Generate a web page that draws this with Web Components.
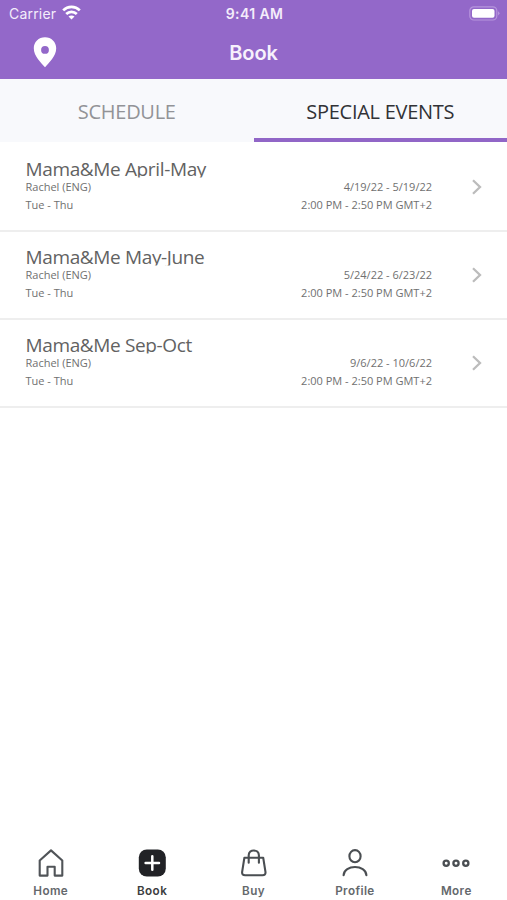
<!DOCTYPE html>
<html lang="en">
<head>
<meta charset="utf-8">
<title>Book</title>
<style>
html,body{margin:0;height:100%;background:#fff;overflow:hidden}
</style>
</head>
<body>
<booking-app></booking-app>
<script>
const define = (name, html) => {
  const t = document.createElement('template');
  t.innerHTML = html;
  customElements.define(name, class extends HTMLElement {
    constructor() {
      super();
      this.attachShadow({ mode: 'open' }).appendChild(t.content.cloneNode(true));
    }
  });
};

define('status-bar', `
<style>
:host{display:grid;grid-template-columns:1fr auto 1fr;align-items:center;height:27px;padding:0 7px 0 9px;font:400 14px/27px Inter,"Liberation Sans",sans-serif;color:#f4edfb}
.left{display:flex;align-items:center;gap:6px;letter-spacing:.2px}
.time{font-weight:600;font-size:14px;letter-spacing:.4px}
svg{display:block}
.left svg{margin-top:-2px}
.battery{justify-self:end;margin-top:-1px}
</style>
<div class="left"><span>Carrier</span>
<svg width="19" height="15" viewBox="0 0 19 15" fill="none" stroke="#fff" stroke-width="2.700"><path d="M1.200 5.400C5.800.8 13.200.8 17.800 5.400"/><path d="M4.200 9c3-2.900 7.600-2.900 10.600 0"/><path d="M9.500 14.600 6.500 11.600c1.700-1.600 4.300-1.600 6 0z" fill="#fff" stroke="none"/></svg></div>
<span class="time">9:41 AM</span>
<svg class="battery" width="31" height="15" viewBox="0 0 31 15"><rect x=".8" y=".8" width="27" height="13.200" rx="4" fill="none" stroke="#b795dd" stroke-width="1.200"/><rect x="3" y="3" width="22.500" height="8.800" rx="2" fill="#fff"/><path d="M29 5.200q3 2.100 0 4.200z" fill="#b795dd"/></svg>`);

define('nav-header', `
<style>
:host{display:grid;grid-template-columns:1fr auto 1fr;align-items:center;height:52px;padding:0 33px;box-sizing:border-box;font:600 20px/52px Inter,"Liberation Sans",sans-serif;color:#f7f1fc}
svg{display:block;margin-top:-1px}
.title{letter-spacing:-.15px}
</style>
<svg width="24" height="31" viewBox="0 0 24 31"><path fill="#fff" fill-rule="evenodd" d="M12 .3C5.600.3.8 5.100.8 11.300.8 19.300 8 25.800 12 30.300c4-4.500 11.200-11 11.200-19C23.200 5.100 18.400.3 12 .3zm0 8.700a3.900 3.900 0 1 1 0 7.800A3.900 3.900 0 0 1 12 9z"/></svg>
<span class="title"><slot></slot></span>`);

define('tab-item', `
<style>
:host{display:flex;flex:1;box-sizing:border-box;height:63px;justify-content:center;color:#929397;border-bottom:4px solid transparent;font:400 20px/65px "Open Sans","Noto Sans",sans-serif}
:host([selected]){color:#313236;border-bottom-color:#9166c7}
span{letter-spacing:-.28px;white-space:nowrap}
</style><span><slot></slot></span>`);

define('tab-strip', `
<style>:host{display:flex;background:#f8f9fc;height:63px}</style><slot></slot>`);

define('event-row', `
<style>
:host{display:flex;box-sizing:border-box;height:88px;padding:16px 25px 0 25.500px;border-bottom:2px solid #eee;color:#707070;font:400 11px/18px "Open Sans","Noto Sans",sans-serif}
.info{flex:1}
.title{height:18px;line-height:18px;overflow:hidden;clip-path:inset(0 0 .5px 0);font-size:19px;color:#626262;white-space:nowrap;letter-spacing:-.36px}
.meta{display:flex;justify-content:space-between}
.arrow{width:50px;display:flex;justify-content:flex-end;padding-top:19px}
svg{display:block}
</style>
<div class="info">
<div class="title"><slot name="title"></slot></div>
<div class="meta"><slot name="host"></slot><slot name="dates"></slot></div>
<div class="meta"><slot name="days"></slot><slot name="time"></slot></div>
</div>
<div class="arrow"><svg width="10" height="16" viewBox="0 0 10 16" fill="none" stroke="#bcbcbc" stroke-width="2.300"><path d="m1 1.200 7 6.800-7 6.800"/></svg></div>`);

define('bar-item', `
<style>
:host{display:flex;flex:1;flex-direction:column;align-items:center;gap:5px;color:#64686c;font:600 11.700px/16px Inter,"Liberation Sans",sans-serif;letter-spacing:.4px}
:host([selected]){color:#3c3d40}
.icon{height:30px;display:flex;align-items:center}
</style><div class="icon"><slot name="icon"></slot></div><span><slot></slot></span>`);

define('bottom-bar', `
<style>:host{display:flex;height:52px}</style><slot></slot>`);

define('booking-app', `
<style>
:host{display:flex;flex-direction:column;height:100vh;background:#fff}
header{background:#9368c9}
main{flex:1;padding-top:2px}
svg{display:block}
</style>
<header><status-bar></status-bar><nav-header>Book</nav-header></header>
<tab-strip><tab-item>SCHEDULE</tab-item><tab-item selected>SPECIAL EVENTS</tab-item></tab-strip>
<main>
<event-row><span slot="title">Mama&amp;Me April-May</span><span slot="host">Rachel (ENG)</span><span slot="dates">4/19/22 - 5/19/22</span><span slot="days">Tue - Thu</span><span slot="time">2:00 PM - 2:50 PM GMT+2</span></event-row>
<event-row><span slot="title">Mama&amp;Me May-June</span><span slot="host">Rachel (ENG)</span><span slot="dates">5/24/22 - 6/23/22</span><span slot="days">Tue - Thu</span><span slot="time">2:00 PM - 2:50 PM GMT+2</span></event-row>
<event-row><span slot="title">Mama&amp;Me Sep-Oct</span><span slot="host">Rachel (ENG)</span><span slot="dates">9/6/22 - 10/6/22</span><span slot="days">Tue - Thu</span><span slot="time">2:00 PM - 2:50 PM GMT+2</span></event-row>
</main>
<bottom-bar>
<bar-item><svg slot="icon" width="28" height="30" viewBox="0 0 28 30" fill="none" stroke="#505458" stroke-width="2.100" stroke-linejoin="round"><path d="M2.700 12.500 14 2.400l11.300 10.100v15.100h-7.600v-8.900h-7.200v8.900H2.700z"/></svg>Home</bar-item>
<bar-item selected><svg slot="icon" width="28" height="30" viewBox="0 0 28 30"><rect x=".8" y="1.500" width="27" height="27" rx="8" fill="#212226"/><path d="M14.300 8.300v13.400M7.600 15H21" stroke="#fff" stroke-width="2.500" stroke-linecap="round"/></svg>Book</bar-item>
<bar-item><svg slot="icon" width="28" height="30" viewBox="0 0 28 30" fill="none" stroke="#4a4e52" stroke-width="2.100" stroke-linecap="round" stroke-linejoin="round"><path d="M4.400 9.700h18.800l2.300 14.500q.2 3.100-3 3.100H5.100q-3.200 0-3-3.100z"/><path d="M8.700 14.700V7.300c0-6.500 10.200-6.500 10.200 0v7.400"/></svg>Buy</bar-item>
<bar-item><svg slot="icon" width="28" height="30" viewBox="0 0 28 30" fill="none" stroke="#4a4e52" stroke-width="2.100" stroke-linecap="round"><ellipse cx="14" cy="8.200" rx="5.600" ry="6.100"/><path d="M2.600 27.300c.3-11 22.500-11 22.800 0"/></svg>Profile</bar-item>
<bar-item><svg slot="icon" width="28" height="30" viewBox="0 0 28 30" fill="none" stroke="#4a4e52" stroke-width="2.300"><circle cx="4.200" cy="15.300" r="2.600"/><circle cx="14" cy="15.300" r="2.600"/><circle cx="23.800" cy="15.300" r="2.600"/></svg>More</bar-item>
</bottom-bar>`);
</script>
</body>
</html>
